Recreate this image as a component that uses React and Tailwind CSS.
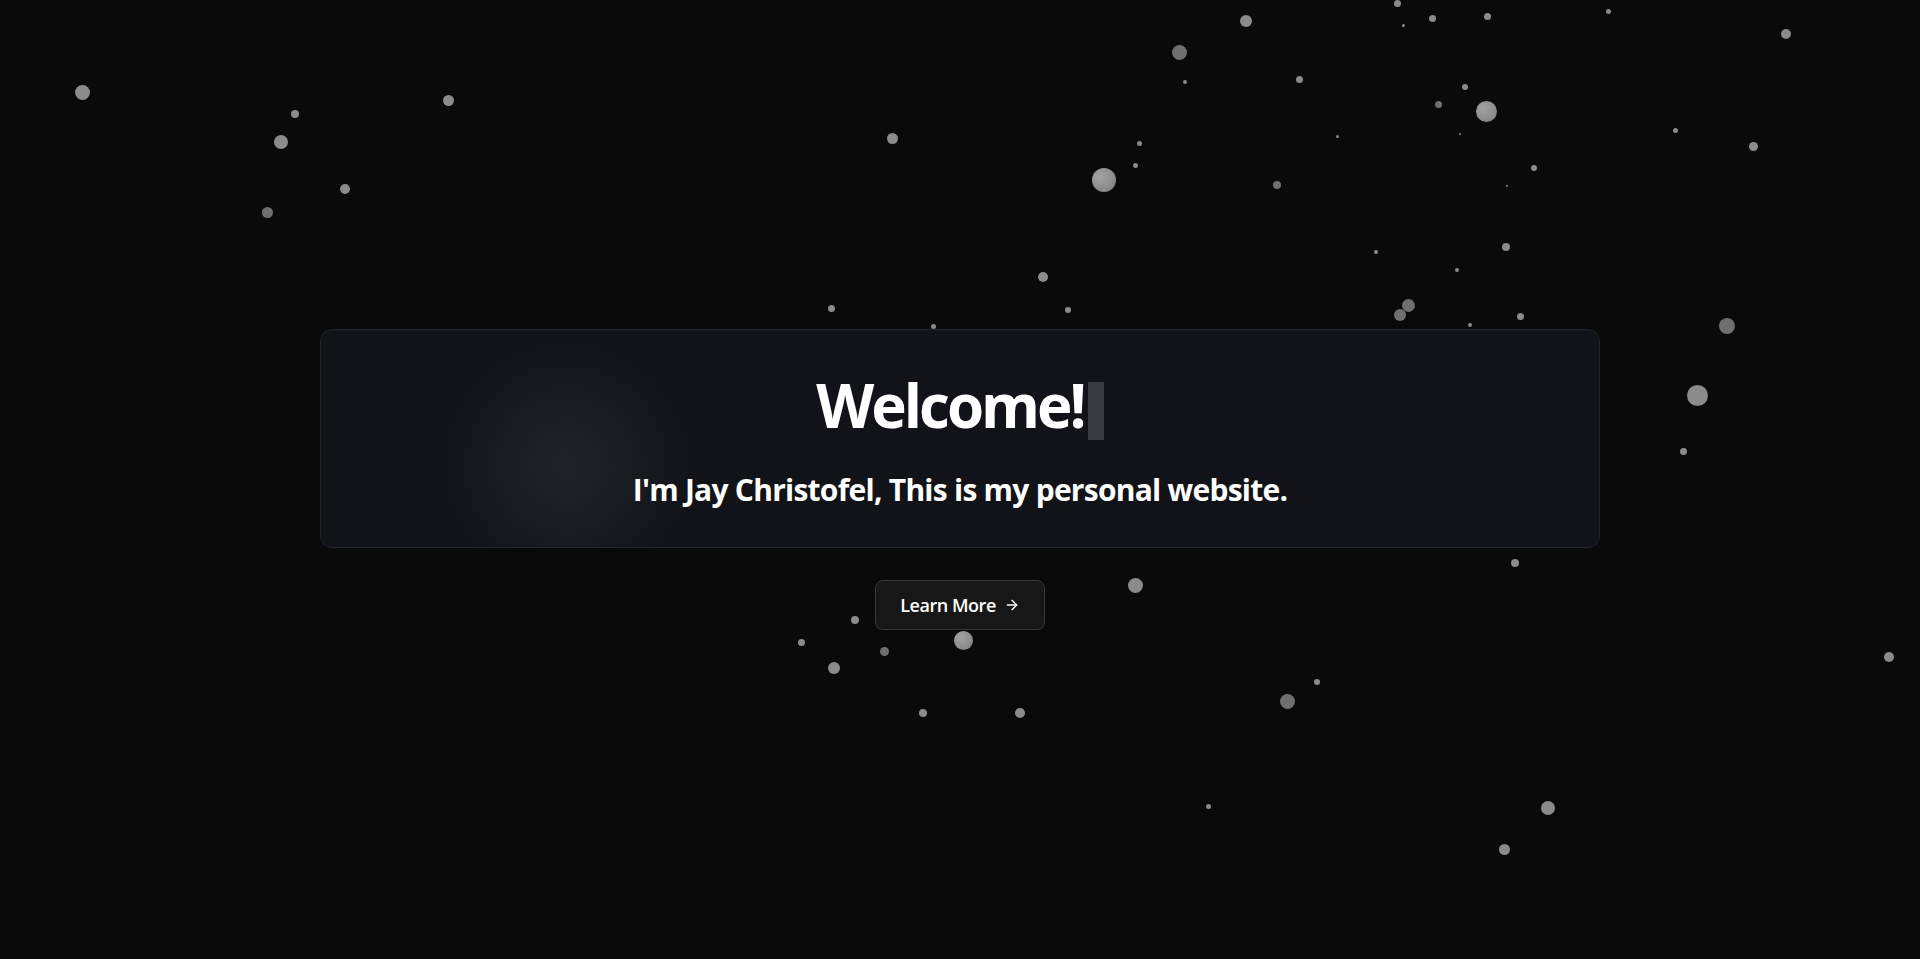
import { ArrowRight } from "lucide-react";

// [x, y, size, tone] — tone: 0 normal, 1 dim, 2 large/shiny
const particles = [
  [82, 92, 15, 0], [448, 100, 11, 0], [295, 114, 8, 0], [281, 142, 14, 0],
  [345, 189, 10, 0], [267, 212, 11, 1], [892, 138, 11, 0], [1043, 277, 10, 0],
  [831, 308, 7, 0], [933, 326, 5, 0], [1397, 3, 7, 0], [1246, 21, 12, 0],
  [1179, 52, 15, 1], [1432, 18, 7, 0], [1487, 16, 7, 0], [1403, 25, 3, 0],
  [1608, 11, 5, 0], [1786, 34, 10, 0], [1185, 82, 4, 0], [1299, 79, 7, 0],
  [1465, 87, 6, 0], [1438, 104, 7, 1], [1486, 111, 21, 2], [1337, 136, 3, 0],
  [1460, 134, 2, 0], [1675, 130, 5, 0], [1753, 146, 9, 0], [1139, 143, 5, 0],
  [1135, 165, 5, 0], [1104, 180, 24, 2], [1277, 185, 8, 1], [1534, 168, 6, 0],
  [1507, 186, 2, 0], [1506, 247, 8, 0], [1376, 252, 4, 0], [1457, 270, 4, 0],
  [1068, 310, 6, 0], [1408, 305, 13, 1], [1400, 315, 12, 1], [1520, 316, 7, 0],
  [1470, 325, 4, 0], [1727, 326, 16, 1], [1697, 395, 21, 0], [1683, 451, 7, 0],
  [1135, 585, 15, 0], [855, 620, 8, 0], [801, 642, 7, 0], [884, 651, 9, 1],
  [834, 668, 12, 0], [963, 640, 19, 2], [923, 713, 8, 0], [1020, 713, 10, 0],
  [1317, 682, 6, 0], [1287, 701, 15, 1], [1208, 806, 5, 0], [1515, 563, 8, 0],
  [1889, 657, 10, 0], [1548, 808, 14, 0], [1504, 849, 11, 0],
];

function Particles() {
  return (
    <div className="pointer-events-none absolute inset-0">
      {particles.map(([x, y, s, tone], i) => (
        <span
          key={i}
          className={`absolute rounded-full ${
            tone === 1
              ? "bg-[#6f6f70]"
              : tone === 2
                ? "bg-[radial-gradient(circle_at_35%_35%,#a3a3a3,#7d7d7f)]"
                : "bg-[#8b8b8b]"
          }`}
          style={{ left: x - s / 2, top: y - s / 2, width: s, height: s }}
        />
      ))}
    </div>
  );
}

export default function App() {
  return (
    <main className="relative flex h-screen flex-col items-center justify-center overflow-hidden bg-[#0a0a0a] text-white [font-family:'Open_Sans',sans-serif]">
      <Particles />

      <div className="relative w-full max-w-7xl overflow-hidden rounded-xl border border-[#20242c] bg-[#111318] px-10 pt-[45px] pb-[39px] text-center">
        <div className="pointer-events-none absolute inset-0 bg-[radial-gradient(circle_at_245px_135px,rgba(255,255,255,0.07),transparent_130px)]" />
        <h1 className="relative text-6xl leading-none font-bold tracking-tighter">
          Welcome!
          <span className="ml-[4px] inline-block h-[58px] w-4 bg-[#3a3b40] align-[-12px]" />
        </h1>
        <p className="relative mt-8 text-3xl font-bold tracking-tight">
          I'm Jay Christofel, This is my personal website.
        </p>
      </div>

      <button
        type="button"
        className="relative mt-8 flex items-center gap-2 rounded-lg border border-[#363638] bg-[#171718] px-6 py-2.5 text-lg font-semibold tracking-tight"
      >
        Learn More
        <ArrowRight size={16} strokeWidth={2} />
      </button>
    </main>
  );
}
